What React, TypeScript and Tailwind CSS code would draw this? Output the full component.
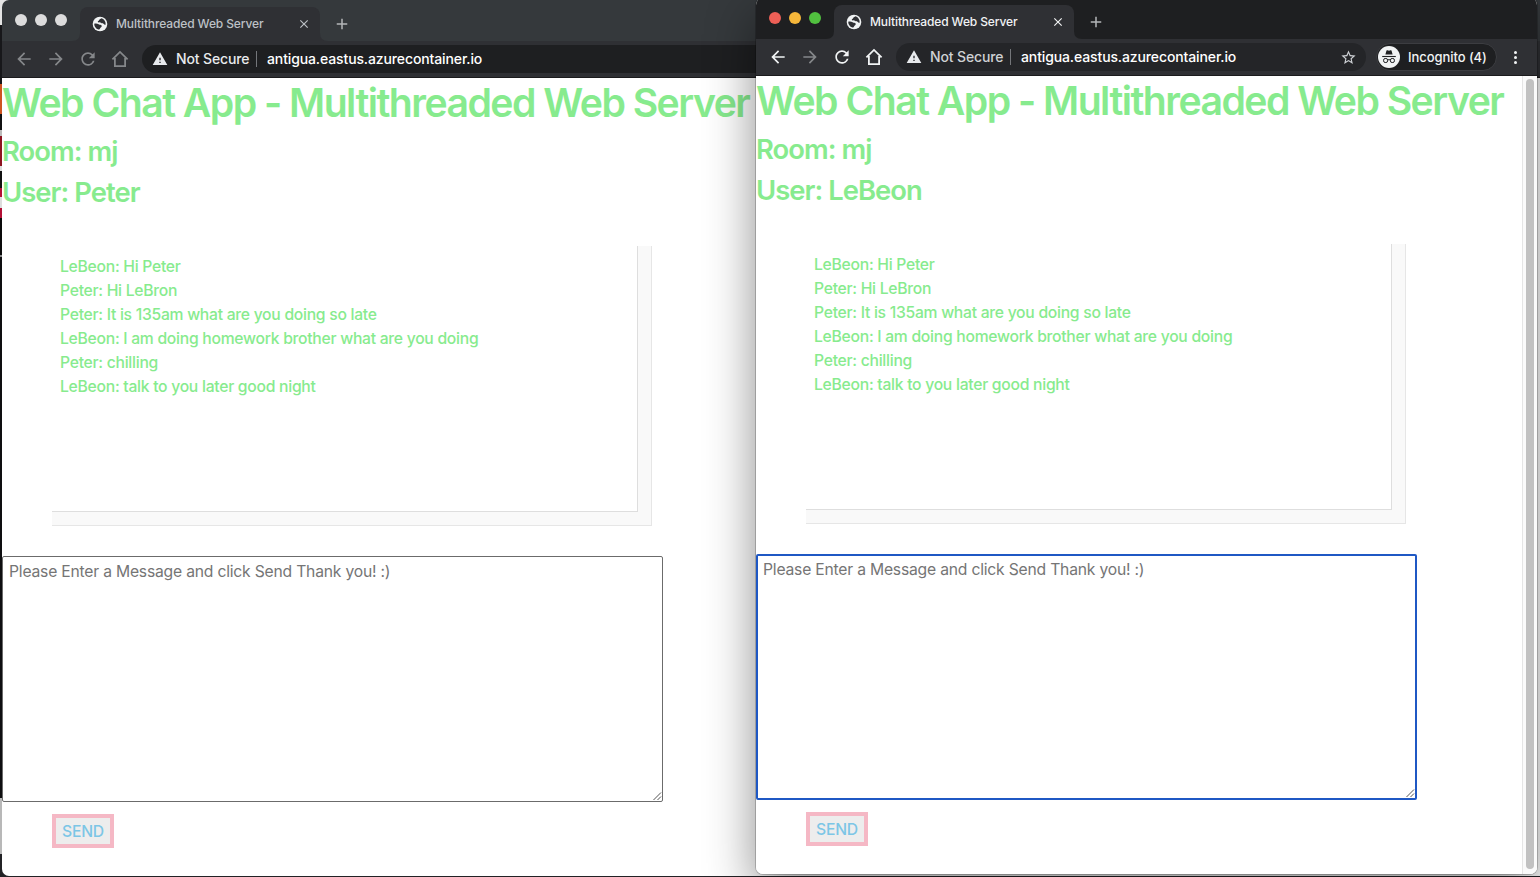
import React from "react";
import { MdArrowBack, MdArrowForward, MdRefresh, MdWarning, MdClose, MdAdd, MdStarBorder } from "react-icons/md";

const messages = [
  "LeBeon: Hi Peter",
  "Peter: Hi LeBron",
  "Peter: It is 135am what are you doing so late",
  "LeBeon: I am doing homework brother what are you doing",
  "Peter: chilling",
  "LeBeon: talk to you later good night",
];

function Globe() {
  return (
    <svg viewBox="0 0 16 16" className="size-4 shrink-0">
      <circle cx="8" cy="8" r="7.3" fill="#f1f3f4" />
      <path
        d="M2.2 7.8 C3.6 7.2 5.6 7.6 6.6 8.2 C7.8 8.9 9.4 8.6 9.8 9.8 C10 11.2 8.4 11.4 8 12.4 C7.8 13.2 7 13.8 6.4 13.5 C3.8 12.8 2.2 10.4 2.2 7.8 Z M9.4 2.3 C8.8 3.2 7.4 3 7.2 4 C7 5 5.6 4.8 5.8 5.8 C6.2 6.8 8.2 6 9 6.8 C9.8 7.8 11.2 7 11.8 8 C12.4 8.8 13 8.8 13.7 8.4 C13.8 5.4 12 3 9.4 2.3 Z"
        fill="#2f3034"
      />
    </svg>
  );
}

function Home() {
  return (
    <svg viewBox="0 0 20 20" className="size-5" fill="none" stroke="currentColor" strokeWidth="1.8">
      <path d="M2.4 10.4 L10 2.9 L17.6 10.4 M4.9 9 V17.1 H15.1 V9" />
    </svg>
  );
}

function IncognitoBadge() {
  return (
    <svg viewBox="0 0 22 22" className="size-[22px]">
      <circle cx="11" cy="11" r="11" fill="#f1f3f4" />
      <path d="M7.4 8.6 L8.5 4.6 Q8.8 4 9.5 4.3 L11 4.8 L12.5 4.3 Q13.2 4 13.5 4.6 L14.6 8.6 Z" fill="#202124" />
      <path d="M4.2 10.5 H17.8" stroke="#202124" strokeWidth="1.1" />
      <g fill="none" stroke="#202124" strokeWidth="1">
        <rect x="5.6" y="12.5" width="4" height="4" rx="1.6" />
        <rect x="12.4" y="12.5" width="4" height="4" rx="1.6" />
        <path d="M9.6 14 Q11 13.2 12.4 14" />
      </g>
    </svg>
  );
}

function Grip() {
  return (
    <svg viewBox="0 0 10 10" className="absolute right-0 bottom-0 size-[10px]" stroke="#555" strokeWidth="1">
      <path d="M1.5 9 L9 1.5 M5.5 9 L9 5.5" />
    </svg>
  );
}

function BrowserWindow({ user, active }: { user: string; active: boolean }) {
  const tabShape = "#2f3034";
  return (
    <div className="flex h-full w-full flex-col overflow-hidden rounded-[7px] bg-white font-['Inter',sans-serif]">
      <div className={`flex h-[41px] shrink-0 ${active ? "bg-[#1e1f21]" : "bg-[#35393c]"}`}>
        <div className="flex w-[70px] gap-2 pt-[14px] pl-[13px]">
          <i className={`size-3 rounded-full ${active ? "bg-[#ed5f56]" : "bg-[#dcdcdc]"}`} />
          <i className={`size-3 rounded-full ${active ? "bg-[#f5b63a]" : "bg-[#dcdcdc]"}`} />
          <i className={`size-3 rounded-full ${active ? "bg-[#51c03f]" : "bg-[#dcdcdc]"}`} />
        </div>
        <svg viewBox="0 0 8 8" className="size-2 self-end"><path d="M0 8 Q8 8 8 0 V8 Z" fill={tabShape} /></svg>
        <div className={`mt-[7px] flex h-[34px] w-[240px] items-center rounded-t-lg bg-[#2f3034] pr-[9px] pl-3 ${active ? "text-[#f1f3f4]" : "text-[#bdc1c6]"}`}>
          <Globe />
          <span className="ml-2 flex-1 text-[12px] font-[450] tracking-[-0.12px] whitespace-nowrap">Multithreaded Web Server</span>
          <MdClose className="size-[14px]" />
        </div>
        <svg viewBox="0 0 8 8" className="size-2 self-end"><path d="M0 0 Q0 8 8 8 H0 Z" fill={tabShape} /></svg>
        <MdAdd className="mt-[15px] ml-[5px] size-[18px] text-[#b4b6b8]" />
      </div>

      <div className="flex h-[37px] shrink-0 items-center border-b border-[#1b1b1d] bg-[#2f3034] pl-3">
        <div className={`flex items-center gap-3 ${active ? "text-[#f1f3f4]" : "text-[#85878a]"}`}>
          <MdArrowBack className="size-5" />
          <MdArrowForward className="size-5 text-[#85878a]" />
          <MdRefresh className="size-5" />
          <Home />
        </div>
        <div className={`ml-3 flex h-7 items-center rounded-full pr-[9px] pl-[10px] text-[14px] font-[450] ${active ? "w-[470px] bg-[#242528]" : "w-[900px] bg-[#1e1f21]"}`}>
          <MdWarning className="size-4 text-[#e8eaed]" />
          <span className={`relative -top-px ml-2 w-[73px] whitespace-nowrap tracking-[-0.14px] ${active ? "text-[#cfd1d4]" : "text-[#e8eaed]"}`}>Not Secure</span>
          <span className="ml-[7px] h-4 w-px bg-[#74767a]" />
          <span className="relative -top-px ml-[10px] flex-1 whitespace-nowrap tracking-[-0.12px] text-white">antigua.eastus.azurecontainer.io</span>
          {active && <MdStarBorder className="size-[17px] text-[#cdd0d4]" />}
        </div>
        {active && (
          <>
            <div className="ml-[10px] flex h-7 w-[121px] items-center rounded-full border border-[#3c3d41] bg-[#1e1f21] pl-px text-[13px] font-[450] text-[#f1f3f4]">
              <IncognitoBadge />
              <span className="relative top-px ml-2 tracking-[-0.06px] whitespace-nowrap">Incognito (4)</span>
            </div>
            <div className="ml-[17px] flex flex-col gap-[2px]">
              <i className="size-[3px] rounded-full bg-[#f1f3f4]" />
              <i className="size-[3px] rounded-full bg-[#f1f3f4]" />
              <i className="size-[3px] rounded-full bg-[#f1f3f4]" />
            </div>
          </>
        )}
      </div>

      <div className="flex min-h-0 flex-1">
        <main className="min-w-0 flex-1 pt-px text-[#87eb8e]">
          <h1 className="mb-2 text-[39.2px] leading-[48px] font-[570] tracking-[-1.53px] whitespace-nowrap">Web Chat App - Multithreaded Web Server</h1>
          <h3 className="mb-[7px] text-[27.4px] leading-[33.6px] font-[570] tracking-[-0.95px]">Room: mj</h3>
          <h3 className="text-[27.4px] leading-[33.6px] font-[570] tracking-[-0.95px]">User: {user}</h3>
          <div className="mt-[36.8px] ml-[50px] h-[280px] w-[600px] border-r border-b border-[#e6e6e6] bg-[#f9f9f9] pr-[13px] pb-[13px]">
            <div className="h-full w-full border-r border-b border-[#dedede] bg-white px-2 pt-[9px] text-[15.7px] leading-6 font-[450] tracking-[-0.27px]">
              {messages.map((m) => <p key={m}>{m}</p>)}
            </div>
          </div>
          <div className={`relative mt-[30px] h-[246px] w-[661px] rounded-[2px] text-[15.7px] leading-6 font-[430] tracking-[-0.21px] text-[#757575] ${active ? "border-2 border-[#1f58c4] px-[5px] py-0.5" : "border border-[#6b6b6b] px-1.5 py-[3px]"}`}>
            Please Enter a Message and click Send Thank you! :)
            <Grip />
          </div>
          <button className="mt-3 ml-[50px] flex h-[34px] w-[62px] items-center justify-center border-4 border-[#f5b8c5] bg-[#ededed] pt-px text-[15.7px] font-[450] tracking-[-0.2px] text-[#7cc6e6]">SEND</button>
        </main>
        {active && (
          <div className="flex w-[15px] border-l border-[#e5e5e5] bg-[#fafafa] pt-[3px] pb-[5px] pl-[3px]">
            <div className="w-2 rounded-full bg-[#c1c1c1]" />
          </div>
        )}
      </div>
    </div>
  );
}

export default function App() {
  return (
    <div className="relative h-[877px] w-[1540px] overflow-hidden bg-[#222225]">
      <div className="flex h-full w-2 flex-col">
        <i className="h-[25px] bg-[#e4e4e4]" />
        <i className="h-[59px] bg-[#17171a]" />
        <i className="h-[30px] bg-[#cf5420]" />
        <i className="h-4 bg-[#111111]" />
        <i className="h-[6px] bg-[#bbbbbb]" />
        <i className="h-[30px] bg-[#8d1420]" />
        <i className="h-[5px] bg-[#dddddd]" />
        <i className="h-[17px] bg-[#111111]" />
        <i className="h-[9px] bg-[#b31035]" />
        <i className="h-[11px] bg-[#dddddd]" />
        <i className="h-[10px] bg-[#b31035]" />
        <i className="h-[37px] bg-[#0a0a0a]" />
        <i className="h-[2px] bg-[#888888]" />
        <i className="h-[541px] bg-[#0e0e10]" />
        <i className="h-[56px] bg-[#b8b8b8]" />
      </div>
      <div className="absolute top-0 left-[2px] h-[876px] w-[1560px]">
        <BrowserWindow user="Peter" active={false} />
      </div>
      <div className="absolute -top-[2px] left-[756px] h-[876px] w-[781px] rounded-[7px] shadow-[0_0_0_1px_rgba(0,0,0,0.2),0_18px_50px_rgba(0,0,0,0.46)]">
        <BrowserWindow user="LeBeon" active />
      </div>
    </div>
  );
}
